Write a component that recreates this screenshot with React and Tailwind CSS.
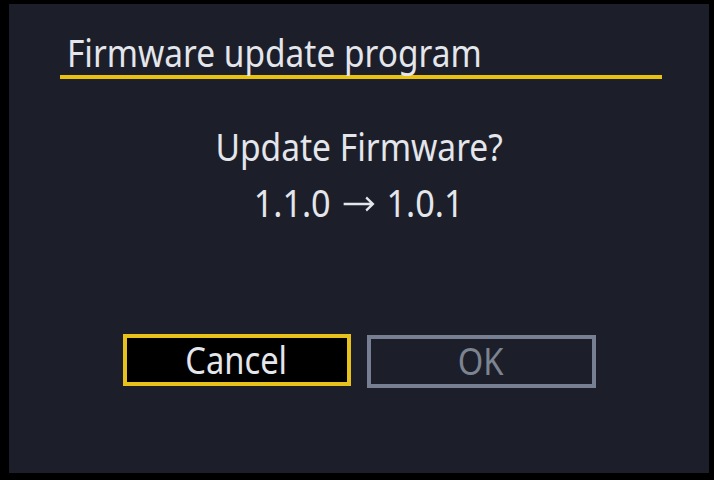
import React from "react";

const App = () => {
  return (
    <div className="w-[714px] h-[480px] bg-black pt-[4px] pl-[9px] overflow-hidden">
      <div className="w-[700px] h-[469px] bg-[#1c1f29] flex flex-col text-[#e4e6ec] font-['Noto_Sans',sans-serif]">
        {/* Title */}
        <div className="ml-[51px] mr-[47px] mt-[29px] border-b-[4px] border-[#e8c20c] pl-[7px] pb-[2px]">
          <h1 className="text-[38px] leading-[38px] inline-block origin-left scale-x-[0.88]">
            Firmware update program
          </h1>
        </div>

        {/* Message */}
        <div className="flex flex-col items-center mt-[48px]">
          <div className="text-[39px] leading-[38px] scale-x-[0.86]">Update Firmware?</div>
          <div className="text-[38px] leading-[38px] mt-[18px] scale-x-[0.9] flex items-center">
            <span>1.1.0</span>
            <svg className="w-[36px] h-[16px] mx-[13px] mt-[4px]" viewBox="0 0 36 16" fill="none" stroke="#e4e6ec" strokeWidth="2.4">
              <path d="M1 8h32M26 1.5l7.5 6.5-7.5 6.5" />
            </svg>
            <span>1.0.1</span>
          </div>
        </div>

        {/* Buttons */}
        <div className="flex justify-center gap-[16px] mt-[113px]">
          <button className="w-[228px] h-[52px] bg-black border-[4px] border-[#e7c21a] flex items-center justify-center pb-[3px]">
            <span className="text-[38px] leading-[38px] text-[#e4e6ec] inline-block scale-x-[0.86]">Cancel</span>
          </button>
          <button className="w-[229px] h-[53px] mt-[1px] border-[4px] border-[#777f92] flex items-center justify-center pb-[3px]">
            <span className="text-[38px] leading-[38px] text-[#7c8391] inline-block scale-x-[0.86]">OK</span>
          </button>
        </div>
      </div>
    </div>
  );
};

export default App;
